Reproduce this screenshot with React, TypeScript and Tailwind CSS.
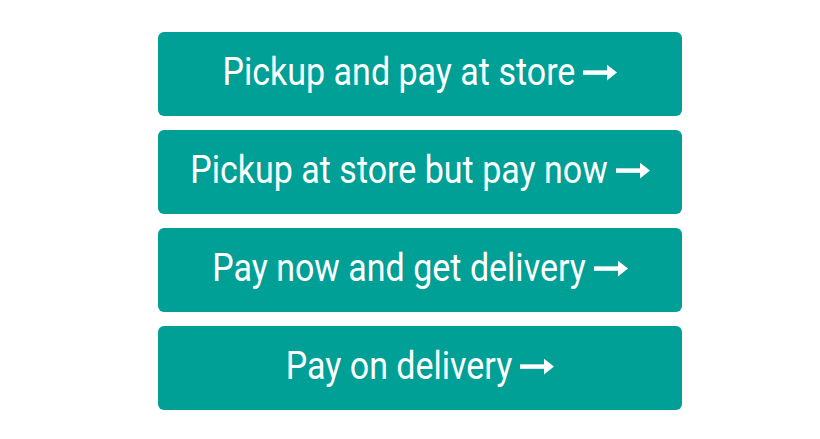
const options = [
  "Pickup and pay at store",
  "Pickup at store but pay now",
  "Pay now and get delivery",
  "Pay on delivery",
];

function LongArrow() {
  return (
    <svg width="34" height="16" viewBox="0 0 34 16" className="shrink-0">
      <rect x="0" y="6" width="26" height="4" fill="currentColor" />
      <path d="M24 1 L34 8 L24 15 Z" fill="currentColor" />
    </svg>
  );
}

export default function App() {
  return (
    <div className="w-[820px] h-[439px] bg-white flex pl-[158px] pt-[32px]">
      <div className="w-[524px] flex flex-col gap-[14px]">
        {options.map((label) => (
          <button
            key={label}
            className="h-[84px] w-full rounded-[6px] bg-[#00a097] text-white flex items-center justify-center text-[34px] font-['Roboto',sans-serif]"
          >
            <span className="flex items-center gap-[8px] scale-y-[1.12] -translate-y-[2.5px]">
              <span>{label}</span>
              <LongArrow />
            </span>
          </button>
        ))}
      </div>
    </div>
  );
}
